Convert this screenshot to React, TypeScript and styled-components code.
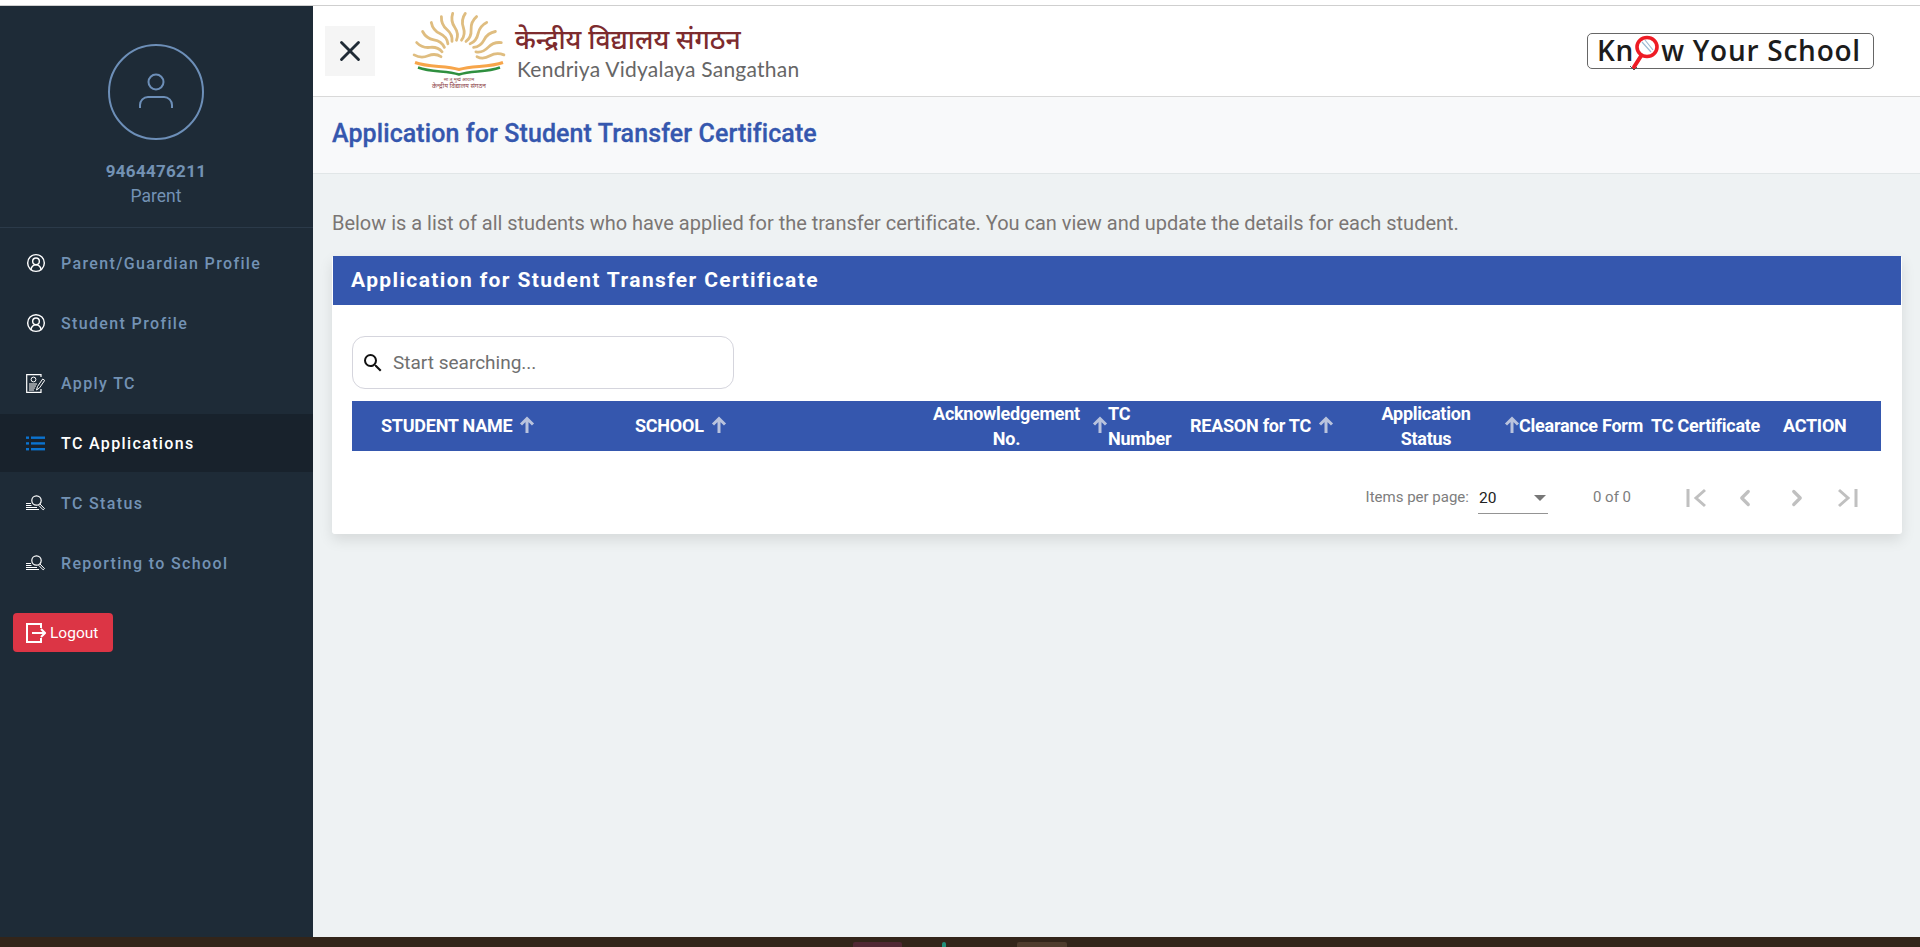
import React from "react";
import styled, { createGlobalStyle } from "styled-components";
import { ChevronLeft, ChevronRight, CircleUserRound, X } from "lucide-react";
import { MdSearch } from "react-icons/md";

const GlobalStyle = createGlobalStyle`
  html, body { margin: 0; padding: 0; height: 100%; overflow: hidden; }
  body { font-family: Roboto, "Noto Sans", "Liberation Sans", sans-serif; background: #fff; }
  * { box-sizing: border-box; }
`;

const Page = styled.div`display: flex; flex-direction: column; height: 947px; overflow: hidden;`;
const TopStrip = styled.div`height: 6px; flex: none; background: #fff; border-bottom: 1px solid #cfcfcf;`;
const Body = styled.div`display: flex; flex: 1; min-height: 0;`;

const Sidebar = styled.aside`width: 313px; flex: none; background: #1e2b37; display: flex; flex-direction: column;`;
const Profile = styled.div`height: 222px; flex: none; padding: 38px 1px 0 0; display: flex; flex-direction: column; align-items: center; border-bottom: 1px solid #2b3a49;`;
const Avatar = styled.svg`width: 96px; height: 96px; flex: none;`;
const UserPhone = styled.div`margin-top: 21px; font-size: 17px; line-height: 20px; font-weight: 700; letter-spacing: 0.3px; color: #7392b4;`;
const UserRole = styled.div`margin-top: 5px; font-size: 17.5px; line-height: 20px; color: #7392b4;`;
const Nav = styled.nav`padding-top: 6px; display: flex; flex-direction: column; gap: 2px;`;
const NavItem = styled.div<{ $active?: boolean }>`
  height: 58px; padding-left: 26px; display: flex; align-items: center; gap: 16px;
  background: ${p => (p.$active ? "#18222c" : "transparent")};
  color: ${p => (p.$active ? "#ffffff" : "#7392b4")};
  font-size: 16px; font-weight: 500; letter-spacing: 1.36px;
`;
const NavIconSlot = styled.span`width: 19px; height: 19px; flex: none; display: flex; align-items: center; color: #fff; svg { display: block; flex: none; }`;
const LogoutButton = styled.button`
  margin: 21px 0 0 13px; width: 100px; height: 39px; border: 0; border-radius: 4px; background: #dc3545; color: #fff;
  font: 400 15.5px Roboto, sans-serif; display: flex; align-items: center; gap: 4px; padding: 0 0 0 13px;
`;

const Main = styled.main`flex: 1; min-width: 0; background: #eef2f3; display: flex; flex-direction: column;`;
const Header = styled.header`height: 91px; flex: none; background: #fff; border-bottom: 1px solid #d9d9d9; display: flex; align-items: center; padding: 0 46px 0 12px;`;
const CloseButton = styled.button`width: 50px; height: 50px; border: 0; background: #f5f5f5; color: #1f2a35; display: flex; align-items: center; justify-content: center; padding: 0; flex: none;`;
const LogoMark = styled.svg`width: 94px; height: 80px; flex: none; margin-left: 37px;`;
const LogoText = styled.div`margin-left: 9px; display: flex; flex-direction: column;`;
const HindiName = styled.div`font-family: "Noto Sans", "Noto Sans Devanagari", sans-serif; font-size: 26.5px; line-height: 35px; font-weight: 500; color: #7d2b2e; white-space: nowrap;`;
const EnglishName = styled.div`font-family: Lato, sans-serif; font-size: 21px; line-height: 23px; letter-spacing: 0.24px; color: #666; margin-left: 2px; white-space: nowrap;`;
const KnowBox = styled.div`
  margin-left: auto; position: relative; width: 287px; height: 36px; border: 1px solid #666; border-radius: 5px; padding: 0 0 2px 9px;
  display: flex; align-items: center; font-family: "Open Sans", sans-serif; font-weight: 650; font-size: 28px; letter-spacing: 0.75px; color: #1c1c1c; white-space: nowrap;
`;
const KnowLens = styled.svg`width: 32px; height: 42px; margin: 0 -2px 0 -3px; flex: none; overflow: visible; position: relative; top: 7px;`;

const TitleBand = styled.div`height: 77px; flex: none; background: #f8f9fa; border-bottom: 1px solid #e1e6e7; display: flex; align-items: center; padding: 0 0 4px 19px;`;
const PageTitle = styled.h1`margin: 0; font-size: 25px; font-weight: 500; letter-spacing: 0.09px; color: #3557ae; -webkit-text-stroke: 0.3px #3557ae;`;

const Content = styled.div`padding: 37px 18px 0 19px;`;
const Intro = styled.p`margin: 0 0 21px; font-size: 20px; line-height: 24px; letter-spacing: -0.02px; color: #7b7674;`;
const Card = styled.section`background: #fff; border: 1px solid #fff; border-top: 0; border-radius: 3px; box-shadow: 0 6px 14px rgba(0,0,0,.1);`;
const CardHeader = styled.div`height: 49px; background: #3557ae; color: #fff; padding: 0 0 2px 18px; display: flex; align-items: center; font-size: 21px; font-weight: 700; letter-spacing: 1.37px;`;
const CardBody = styled.div`padding: 31px 20px 0 19px;`;
const SearchBox = styled.div`width: 382px; height: 53px; border: 1px solid #d5d5dd; border-radius: 13px; display: flex; align-items: center; padding-left: 8px; gap: 8px; color: #111;`;
const SearchText = styled.span`font-size: 19px; color: #6f6f6f;`;

const TableHead = styled.div`
  margin-top: 12px; height: 50px; background: #3557ae; color: #fff;
  display: grid; grid-template-columns: 283px 298px 175px 82px 191px 138px 132px 132px 98px; grid-template-rows: 50px;
  font-size: 18px; font-weight: 700; line-height: 25px; letter-spacing: -0.25px;
`;
const HeadCell = styled.div<{ $pad?: number }>`display: flex; align-items: center; height: 50px; padding: 0 0 2px ${p => p.$pad ?? 0}px; white-space: nowrap;`;
const HeadLabel = styled.div<{ $width?: number }>`margin-top: 2px; flex: none; text-align: center; white-space: normal; ${p => (p.$width ? `width: ${p.$width}px;` : "text-align: left; width: 70px;")}`;
const Sort = styled.span<{ $gap: number }>`display: flex; margin-left: ${p => p.$gap}px; color: #b9c3dd; svg { display: block; }`;

const Pager = styled.div`height: 82px; padding: 10px 23px 0 0; display: flex; align-items: center; justify-content: flex-end; font-size: 15px; color: #7d7d7d;`;
const PerPage = styled.span`margin-right: 9px;`;
const PageSelect = styled.div`width: 70px; height: 30px; margin-top: 3px; border-bottom: 1px solid #949494; display: flex; align-items: center; justify-content: space-between; padding: 0 2px 0 1px; color: #222; font-size: 15.5px;`;
const Caret = styled.span`width: 0; height: 0; border-left: 6px solid transparent; border-right: 6px solid transparent; border-top: 6px solid #777;`;
const RangeText = styled.span`margin: -1px 55px 0 45px; font-size: 15px;`;
const PagerIcons = styled.div`display: flex; align-items: center; gap: 26px; padding-top: 2px; color: #c0c0c0; svg { display: block; }`;
const Taskbar = styled.footer`height: 10px; flex: none; background: #33251a; display: flex; padding: 5px 0 0 853px;`;
const TaskIcon = styled.span<{ $color: string; $width: number; $gap: number }>`display: block; height: 5px; width: ${p => p.$width}px; margin-right: ${p => p.$gap}px; background: ${p => p.$color}; border-radius: 2px 2px 0 0;`;

const RAYS = [-86, -70, -54, -38, -23, -8, 8, 23, 38, 54, 70, 86];
const rayPath = (deg: number) => {
  const a = (deg * Math.PI) / 180;
  const d = { x: Math.sin(a), y: -Math.cos(a) };
  const n = { x: -d.y, y: d.x };
  const pt = (r: number, off: number) => `${(47 + d.x * r + n.x * off).toFixed(1)} ${(47 + d.y * r + n.y * off).toFixed(1)}`;
  return `M${pt(18, 0)} Q${pt(24, 3.5)} ${pt(31, 0)} T${pt(45, 0)}`;
};

const CertificateIcon = () => (
  <svg width="19" height="19" viewBox="0 0 19 19" fill="none" stroke="currentColor">
    <path d="M15 3V.7H.7v17.6H15V15" strokeWidth="1.2" />
    <circle cx="7.5" cy="5.5" r="2.4" strokeWidth="1" />
    <path d="M3 10h8M3 12h7M3 14h6M3 16h5" strokeWidth="1" />
    <path d="M10.5 16l1-3.5 5.2-7.5 2 1.4-5.2 7.5z" strokeWidth="1" fill="#1e2b37" />
  </svg>
);
const StatusIcon = () => (
  <svg width="19" height="19" viewBox="0 0 19 19" fill="none" stroke="currentColor">
    <circle cx="10.5" cy="6.5" r="4.7" strokeWidth="1.2" />
    <path d="M14 10l4.5 4.6-1.3 1.3-4.5-4.6" strokeWidth="1" />
    <path d="M0 9.5h5M0 11.5h5.5M0 13.5h11M0 15.5h13" strokeWidth="1" />
  </svg>
);
const ListIcon = () => (
  <svg width="19" height="15" viewBox="0 0 19 15" fill="#0b73cf">
    <rect x="0" y="0.5" width="3" height="2.4" />
    <rect x="0" y="6.2" width="3" height="2.4" />
    <rect x="0" y="12" width="3" height="2.4" />
    <rect x="5" y="0.5" width="14" height="2.4" />
    <rect x="5" y="6.2" width="14" height="2.4" />
    <rect x="5" y="12" width="14" height="2.4" />
  </svg>
);
const LogoutIcon = () => (
  <svg width="20" height="20" viewBox="0 0 20 20" fill="none" stroke="currentColor" strokeWidth="2">
    <path d="M15 5V1H1v18h14v-4" />
    <path d="M6 10h13M15 6l4 4-4 4" />
  </svg>
);
const FirstIcon = () => (
  <svg width="20" height="22" viewBox="0 0 20 22" fill="none" stroke="currentColor" strokeWidth="3"><path d="M2 2v18M19 3l-9 8 9 8" /></svg>
);
const LastIcon = () => (
  <svg width="22" height="22" viewBox="0 0 22 22" fill="none" stroke="currentColor" strokeWidth="3"><path d="M20 2v18M3 3l9 8-9 8" /></svg>
);
const Arrow = () => (
  <svg width="18" height="18" viewBox="0 0 18 18" fill="none" stroke="currentColor" strokeWidth="3"><path d="M9 17V3M3 8.5 9 2.5l6 6" /></svg>
);

const navItems = [
  { label: "Parent/Guardian Profile", icon: <CircleUserRound size={20} strokeWidth={1.7} /> },
  { label: "Student Profile", icon: <CircleUserRound size={20} strokeWidth={1.7} /> },
  { label: "Apply TC", icon: <CertificateIcon /> },
  { label: "TC Applications", icon: <ListIcon />, active: true },
  { label: "TC Status", icon: <StatusIcon /> },
  { label: "Reporting to School", icon: <StatusIcon /> },
];

export default function App() {
  return (
    <Page>
      <GlobalStyle />
      <TopStrip />
      <Body>
        <Sidebar>
          <Profile>
            <Avatar viewBox="0 0 96 96" fill="none" stroke="#6d8fb8">
              <circle cx="48" cy="48" r="47" strokeWidth="2" />
              <circle cx="48" cy="38" r="7.5" strokeWidth="2" />
              <path d="M32 64v-3a8 8 0 0 1 8-8h16a8 8 0 0 1 8 8v3" strokeWidth="2" />
            </Avatar>
            <UserPhone>9464476211</UserPhone>
            <UserRole>Parent</UserRole>
          </Profile>
          <Nav>
            {navItems.map(item => (
              <NavItem key={item.label} $active={item.active}>
                <NavIconSlot>{item.icon}</NavIconSlot>
                {item.label}
              </NavItem>
            ))}
          </Nav>
          <LogoutButton><LogoutIcon />Logout</LogoutButton>
        </Sidebar>
        <Main>
          <Header>
            <CloseButton><X size={34} strokeWidth={2} /></CloseButton>
            <LogoMark viewBox="0 0 94 80" fill="none">
              {RAYS.map(r => <path key={r} d={rayPath(r)} stroke="#dfbd80" strokeWidth="2.8" strokeLinecap="round" />)}
              <path d="M3 51.5c14 5 30 3 44 7 14-4 30-2 44-7" stroke="#f7a54a" strokeWidth="3" />
              <path d="M6 56.5c14 5 28 3 41 7 13-4 27-2 41-7" stroke="#2f8f3f" strokeWidth="2.6" />
              <text x="47" y="69.5" textAnchor="middle" fontSize="5" fill="#8d4b50" stroke="none">सा तु मुखं आयाम</text>
              <text x="47" y="77" textAnchor="middle" fontSize="6.5" fill="#8d3f48" stroke="none">केन्द्रीय विद्यालय संगठन</text>
            </LogoMark>
            <LogoText>
              <HindiName>केन्द्रीय विद्यालय संगठन</HindiName>
              <EnglishName>Kendriya Vidyalaya Sangathan</EnglishName>
            </LogoText>
            <KnowBox>
              Kn
              <KnowLens viewBox="0 0 32 42" fill="none">
                <path d="M10 20L3 31" stroke="#ee1c25" strokeWidth="4" strokeLinecap="round" />
                <path d="M-1 30l4 4 3-3" stroke="#555" strokeWidth="1" />
                <ellipse cx="16" cy="11" rx="10" ry="9.5" stroke="#ee1c25" strokeWidth="3.6" fill="#fff" />
                <path d="M11 6l9 10M14 4l8 10" stroke="#9dbcd4" strokeWidth="1.2" />
              </KnowLens>
              w Your School
            </KnowBox>
          </Header>
          <TitleBand><PageTitle>Application for Student Transfer Certificate</PageTitle></TitleBand>
          <Content>
            <Intro>Below is a list of all students who have applied for the transfer certificate. You can view and update the details for each student.</Intro>
            <Card>
              <CardHeader>Application for Student Transfer Certificate</CardHeader>
              <CardBody>
                <SearchBox>
                  <MdSearch size={24} />
                  <SearchText>Start searching...</SearchText>
                </SearchBox>
                <TableHead>
                  <HeadCell $pad={29}>STUDENT NAME<Sort $gap={6}><Arrow /></Sort></HeadCell>
                  <HeadCell>SCHOOL<Sort $gap={6}><Arrow /></Sort></HeadCell>
                  <HeadCell><HeadLabel $width={147}>Acknowledgement No.</HeadLabel><Sort $gap={11}><Arrow /></Sort></HeadCell>
                  <HeadCell><HeadLabel>TC Number</HeadLabel></HeadCell>
                  <HeadCell>REASON for TC<Sort $gap={6}><Arrow /></Sort></HeadCell>
                  <HeadCell><HeadLabel $width={90}>Application Status</HeadLabel><Sort $gap={32}><Arrow /></Sort></HeadCell>
                  <HeadCell>Clearance Form</HeadCell>
                  <HeadCell>TC Certificate</HeadCell>
                  <HeadCell>ACTION</HeadCell>
                </TableHead>
                <Pager>
                  <PerPage>Items per page:</PerPage>
                  <PageSelect>20<Caret /></PageSelect>
                  <RangeText>0 of 0</RangeText>
                  <PagerIcons>
                    <FirstIcon />
                    <ChevronLeft size={26} strokeWidth={3} />
                    <ChevronRight size={26} strokeWidth={3} />
                    <LastIcon />
                  </PagerIcons>
                </Pager>
              </CardBody>
            </Card>
          </Content>
        </Main>
      </Body>
      <Taskbar>
        <TaskIcon $color="#512834" $width={49} $gap={40} />
        <TaskIcon $color="#1f8f7a" $width={4} $gap={71} />
        <TaskIcon $color="#4f3c2d" $width={50} $gap={0} />
      </Taskbar>
    </Page>
  );
}
